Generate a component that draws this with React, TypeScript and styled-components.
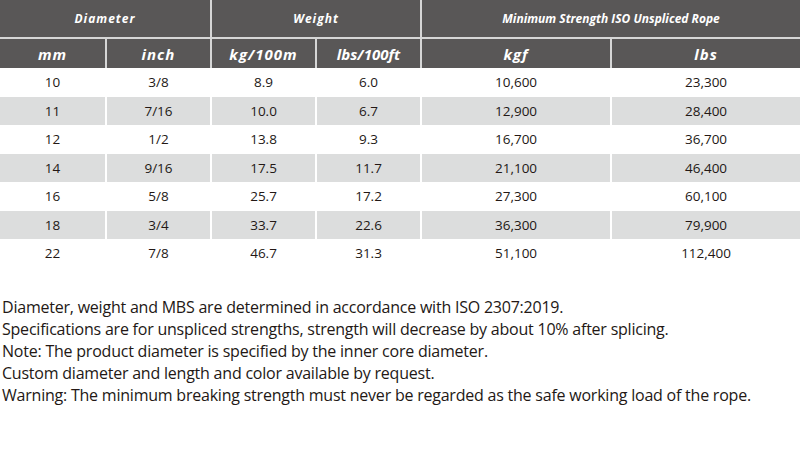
import React from "react";
import styled, { createGlobalStyle } from "styled-components";

const GlobalStyle = createGlobalStyle`
  html, body {
    margin: 0;
    padding: 0;
    background: #fff;
  }
  body {
    font-family: "Open Sans", "Liberation Sans", sans-serif;
    color: #231815;
  }
`;

const Page = styled.div`
  width: 800px;
  height: 451px;
  overflow: hidden;
`;

const Table = styled.table`
  width: 800px;
  table-layout: fixed;
  border-collapse: separate;
  border-spacing: 0;
`;

const Col = styled.col<{ $w: number }>`
  width: ${(p) => p.$w}px;
`;

const HeadCell = styled.th<{ $top?: boolean; $spaced?: boolean; $first?: boolean }>`
  background: #595757;
  color: #fff;
  font-style: italic;
  font-weight: 700;
  font-size: ${(p) => (p.$top ? "12px" : "15px")};
  letter-spacing: ${(p) => (p.$spaced ? "1px" : "0")};
  height: ${(p) => (p.$top ? "37px" : "29px")};
  padding: 0;
  text-align: center;
  vertical-align: middle;
  border-left: ${(p) => (p.$first ? "none" : "2px solid #d6d6d6")};
  border-bottom: ${(p) => (p.$top ? "2px solid #d6d6d6" : "none")};
`;

const Row = styled.tr<{ $shaded: boolean }>`
  background: ${(p) => (p.$shaded ? "#dcdddd" : "#fff")};
`;

const Cell = styled.td<{ $first?: boolean }>`
  height: 28.5px;
  padding: 0;
  text-align: center;
  vertical-align: middle;
  font-size: 13.5px;
  border-left: ${(p) => (p.$first ? "none" : "2px solid #fff")};
`;

const Notes = styled.div`
  margin-top: 28px;
  padding-left: 2px;
  font-size: 16px;
  line-height: 22.2px;
  letter-spacing: -0.22px;
`;

const Line = styled.div`
  white-space: nowrap;
`;

const widths = [105, 105, 105, 105, 190, 190];

const rows = [
  ["10", "3/8", "8.9", "6.0", "10,600", "23,300"],
  ["11", "7/16", "10.0", "6.7", "12,900", "28,400"],
  ["12", "1/2", "13.8", "9.3", "16,700", "36,700"],
  ["14", "9/16", "17.5", "11.7", "21,100", "46,400"],
  ["16", "5/8", "25.7", "17.2", "27,300", "60,100"],
  ["18", "3/4", "33.7", "22.6", "36,300", "79,900"],
  ["22", "7/8", "46.7", "31.3", "51,100", "112,400"],
];

const units = [
  { label: "mm", spaced: true },
  { label: "inch", spaced: true },
  { label: "kg/100m", spaced: true },
  { label: "lbs/100ft", spaced: false },
  { label: "kgf", spaced: true },
  { label: "lbs", spaced: true },
];

const notes = [
  "Diameter, weight and MBS are determined in accordance with ISO 2307:2019.",
  "Specifications are for unspliced strengths, strength will decrease by about 10% after splicing.",
  "Note: The product diameter is specified by the inner core diameter.",
  "Custom diameter and length and color available by request.",
  "Warning: The minimum breaking strength must never be regarded as the safe working load of the rope.",
];

const App = () => {
  return (
    <Page>
      <GlobalStyle />
      <Table>
        <colgroup>
          {widths.map((w, i) => (
            <Col key={i} $w={w} />
          ))}
        </colgroup>
        <thead>
          <tr>
            <HeadCell $top $spaced $first colSpan={2}>
              Diameter
            </HeadCell>
            <HeadCell $top $spaced colSpan={2}>
              Weight
            </HeadCell>
            <HeadCell $top colSpan={2}>
              Minimum Strength ISO Unspliced Rope
            </HeadCell>
          </tr>
          <tr>
            {units.map((u, i) => (
              <HeadCell key={u.label} $spaced={u.spaced} $first={i === 0}>
                {u.label}
              </HeadCell>
            ))}
          </tr>
        </thead>
        <tbody>
          {rows.map((r, i) => (
            <Row key={r[0]} $shaded={i % 2 === 1}>
              {r.map((v, j) => (
                <Cell key={j} $first={j === 0}>
                  {v}
                </Cell>
              ))}
            </Row>
          ))}
        </tbody>
      </Table>
      <Notes>
        {notes.map((n) => (
          <Line key={n}>{n}</Line>
        ))}
      </Notes>
    </Page>
  );
};

export default App;
